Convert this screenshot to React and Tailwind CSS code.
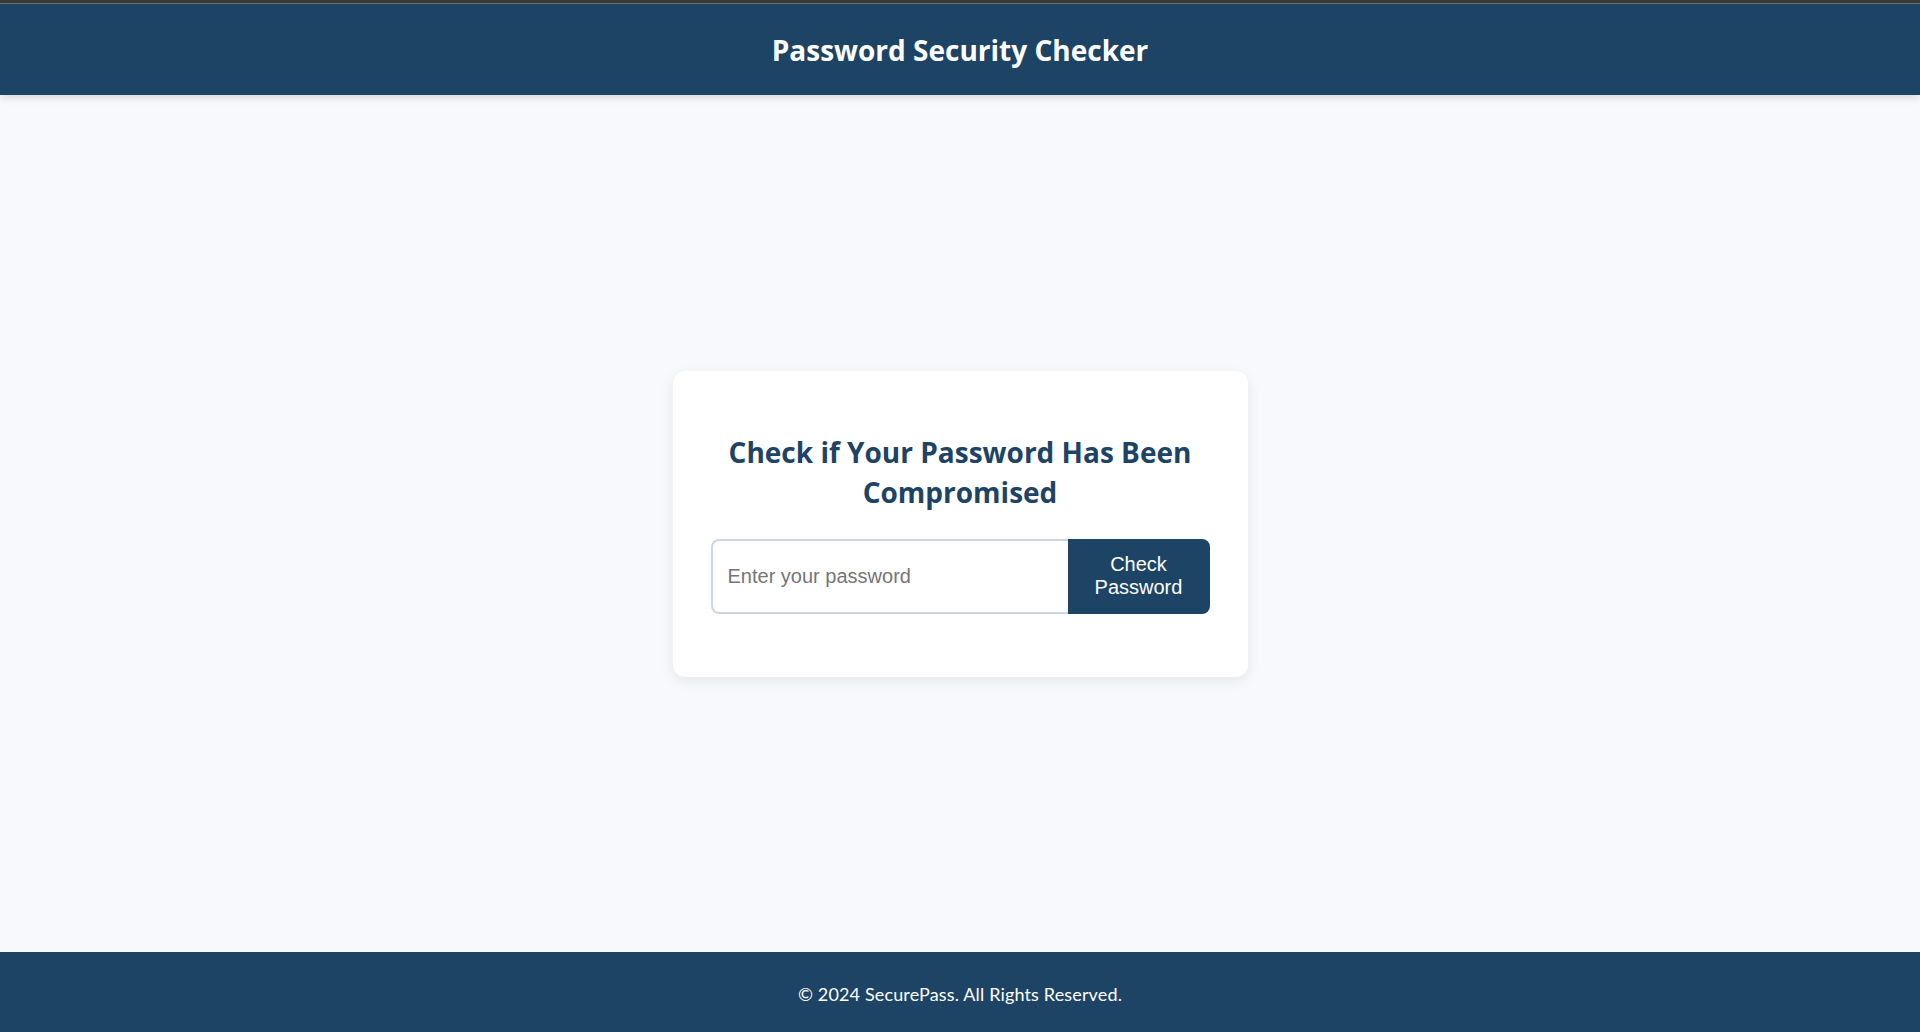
import { useState } from "react";

function App() {
  const [password, setPassword] = useState("");

  return (
    <div className="min-h-screen flex flex-col bg-[#f7f9fc] font-['Lato',sans-serif]">
      {/* ust cizgi */}
      <div className="h-[3px] bg-[#3b3b3b]" />
      <div className="h-px bg-[#6e6e6e]" />

      <header className="h-[91px] flex items-center justify-center bg-[#1e4465] shadow-[0_3px_8px_rgba(0,0,0,0.12)] z-10">
        <h1 className="text-[28px] font-bold text-white font-['Open_Sans',sans-serif]">
          Password Security Checker
        </h1>
      </header>

      <main className="flex-1 flex items-center justify-center">
        <div className="w-[575px] bg-white rounded-[12px] shadow-[0_4px_14px_rgba(0,0,0,0.08)] px-[38px] pt-[61px] pb-[63px]">
          <h2 className="text-[28px] leading-[40px] font-bold text-[#1e4465] text-center font-['Open_Sans',sans-serif]">
            Check if Your Password Has Been Compromised
          </h2>

          <div className="flex mt-[27px] h-[75px]">
            <input
              type="password"
              value={password}
              onChange={(e) => setPassword(e.target.value)}
              placeholder="Enter your password"
              className="flex-1 min-w-0 border-2 border-r-0 border-[#ccd5e2] rounded-l-[8px] px-[15px] text-[20px] font-['Liberation_Sans',Arial,sans-serif] text-gray-800 placeholder:text-[#757575] outline-none"
            />
            <button className="w-[142px] bg-[#1e4465] text-white rounded-r-[8px] text-[20px] leading-[23px] font-['Liberation_Sans',Arial,sans-serif] px-4">
              Check Password
            </button>
          </div>
        </div>
      </main>

      <footer className="h-[80px] flex items-center justify-center bg-[#1e4465]">
        <p className="text-white text-[18px] tracking-[0.15px] pt-[4px]">
          © 2024 SecurePass. All Rights Reserved.
        </p>
      </footer>
    </div>
  );
}

export default App;
